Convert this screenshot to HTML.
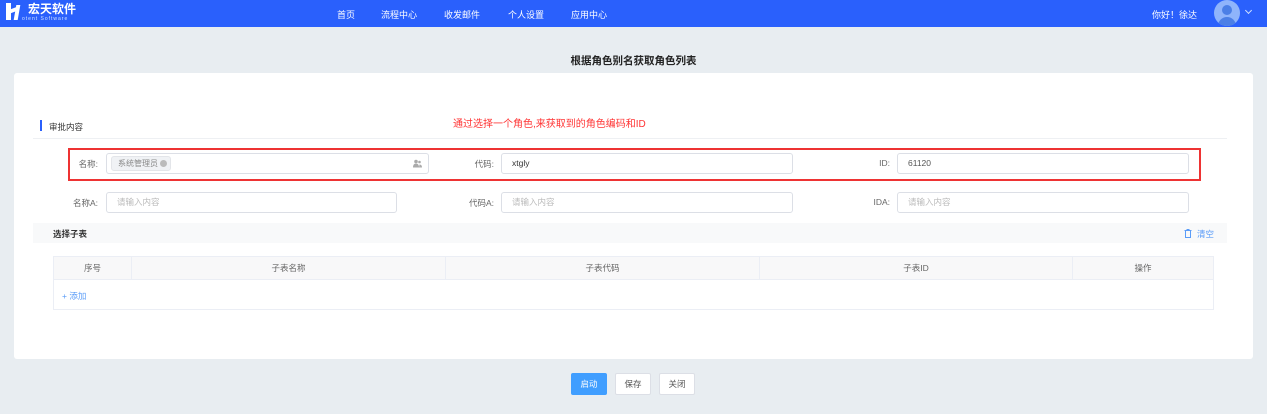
<!DOCTYPE html>
<html><head><meta charset="utf-8"><style>
*{margin:0;padding:0;box-sizing:border-box}
body{width:1267px;height:414px;background:#e8edf1;font-family:"Liberation Sans","Noto Sans CJK SC",sans-serif;font-size:9px;color:#333;position:relative;overflow:hidden}
.abs{position:absolute}
.hdr{left:0;top:0;width:1267px;height:27px;background:#2a60fc}
.nav{top:8px;color:#fff;font-size:9px}
.inp{position:absolute;height:21px;border:1px solid #dcdfe6;border-radius:3px;background:#fff;font-size:8.5px;line-height:19px;padding-left:10px;color:#333}
.ph{color:#bbb}
.lbl{position:absolute;font-size:8.5px;color:#666;text-align:right;width:60px}
.th{position:absolute;top:256px;height:24px;line-height:24px;text-align:center;color:#666;font-size:8.5px;border-right:1px solid #ebeef5}
.btn{position:absolute;top:373px;height:22px;width:36px;border-radius:2px;border:1px solid #dcdfe6;background:#fff;text-align:center;line-height:20px;font-size:8.5px;color:#555}
</style></head><body>
<div class="abs hdr"></div>
<div class="abs" style="left:6px;top:3px;width:5px;height:17px;background:#fff"></div>
<div class="abs" style="left:9px;top:8px;width:10px;height:4px;background:#fff;transform:skewY(-20deg)"></div>
<div class="abs" style="left:15px;top:5px;width:4px;height:15px;background:#fff;transform:skewX(-10deg)"></div>
<div class="abs" style="left:28px;top:0px;color:#fff;font-size:12px;font-weight:bold">宏天软件</div>
<div class="abs" style="left:22px;top:16px;color:#cfe0ff;font-size:5px;letter-spacing:1px">otent Software</div>
<div class="abs nav" style="left:337px">首页</div>
<div class="abs nav" style="left:381px">流程中心</div>
<div class="abs nav" style="left:444px">收发邮件</div>
<div class="abs nav" style="left:508px">个人设置</div>
<div class="abs nav" style="left:571px">应用中心</div>
<div class="abs nav" style="left:1152px">你好！徐达</div>
<div class="abs" style="left:1214px;top:0;width:26px;height:26px;border-radius:13px;background:#8fb4fb;overflow:hidden">
<div class="abs" style="left:8px;top:5px;width:10px;height:10px;border-radius:5px;background:#4b7fe6"></div>
<div class="abs" style="left:4px;top:17px;width:18px;height:12px;border-radius:9px 9px 0 0;background:#4b7fe6"></div></div>
<div class="abs" style="left:1246px;top:8px;width:5px;height:5px;border-right:1px solid #cfe0ff;border-bottom:1px solid #cfe0ff;transform:rotate(45deg)"></div>
<div class="abs" style="left:0;width:1267px;top:53px;text-align:center;font-size:10.5px;font-weight:bold;color:#222">根据角色别名获取角色列表</div>
<div class="abs" style="left:14px;top:73px;width:1239px;height:286px;background:#fff;border-radius:3px"></div>
<div class="abs" style="left:40px;top:120px;width:2px;height:11px;background:#2a60fc"></div>
<div class="abs" style="left:49px;top:121px;font-size:8.5px;color:#333">审批内容</div>
<div class="abs" style="left:33px;top:138px;width:1194px;height:1px;background:#eef0f3"></div>
<div class="abs" style="left:453px;top:115px;font-size:10px;color:#f33">通过选择一个角色,来获取到的角色编码和ID</div>
<div class="abs" style="left:68px;top:148px;width:1133px;height:33px;border:2px solid #ee3333"></div>
<div class="lbl" style="left:38px;top:158px">名称:</div>
<div class="inp" style="left:106px;top:153px;width:323px;padding-left:4px"><span style="display:inline-block;background:#f0f2f5;border:1px solid #e3e5e9;border-radius:3px;height:15px;line-height:13px;padding:0 3px 0 6px;margin-top:2px;color:#888;font-size:8px;vertical-align:top">系统管理员 <span style="display:inline-block;width:7px;height:7px;border-radius:4px;background:#bbb;vertical-align:middle"></span></span>
<svg style="position:absolute;right:6px;top:5px" width="9" height="9" viewBox="0 0 9 9"><circle cx="3" cy="2.5" r="1.8" fill="#aaa"/><path d="M0 8.5q0-4 3-4t3 4z" fill="#aaa"/><circle cx="6.5" cy="3" r="1.3" fill="#aaa"/><path d="M6 8.5h3q0-3-2.5-3" fill="#aaa"/></svg></div>
<div class="lbl" style="left:434px;top:158px">代码:</div>
<div class="inp" style="left:501px;top:153px;width:292px">xtgly</div>
<div class="lbl" style="left:830px;top:158px">ID:</div>
<div class="inp" style="left:897px;top:153px;width:292px;color:#555">61120</div>
<div class="lbl" style="left:38px;top:197px">名称A:</div>
<div class="inp ph" style="left:106px;top:192px;width:291px">请输入内容</div>
<div class="lbl" style="left:434px;top:197px">代码A:</div>
<div class="inp ph" style="left:501px;top:192px;width:292px">请输入内容</div>
<div class="lbl" style="left:830px;top:197px">IDA:</div>
<div class="inp ph" style="left:897px;top:192px;width:292px">请输入内容</div>
<div class="abs" style="left:33px;top:223px;width:1194px;height:20px;background:#f8f9fa"></div>
<div class="abs" style="left:53px;top:228px;font-size:8.5px;font-weight:bold;color:#333">选择子表</div>
<svg class="abs" style="left:1184px;top:229px" width="8" height="9" viewBox="0 0 8 9"><path d="M0.5 1.5h7M3 1.5V0.5h2v1M1.5 1.5v7h5v-7" fill="none" stroke="#5a9cf8" stroke-width="1"/></svg>
<div class="abs" style="left:1197px;top:228px;font-size:8.5px;color:#5a9cf8">清空</div>
<div class="abs" style="left:53px;top:256px;width:1161px;height:54px;border:1px solid #ebeef5;background:#fff"></div>
<div class="abs" style="left:54px;top:257px;width:1159px;height:23px;background:#f8f8f9;border-bottom:1px solid #ebeef5"></div>
<div class="th" style="left:54px;width:78px">序号</div>
<div class="th" style="left:132px;width:314px">子表名称</div>
<div class="th" style="left:446px;width:314px">子表代码</div>
<div class="th" style="left:760px;width:313px">子表ID</div>
<div class="th" style="left:1073px;width:140px;border:none">操作</div>
<div class="abs" style="left:62px;top:290px;font-size:8.5px;color:#5a9cf8">+ 添加</div>
<div class="btn" style="left:571px;background:#409eff;border-color:#409eff;color:#fff">启动</div>
<div class="btn" style="left:615px">保存</div>
<div class="btn" style="left:659px">关闭</div>
</body></html>
